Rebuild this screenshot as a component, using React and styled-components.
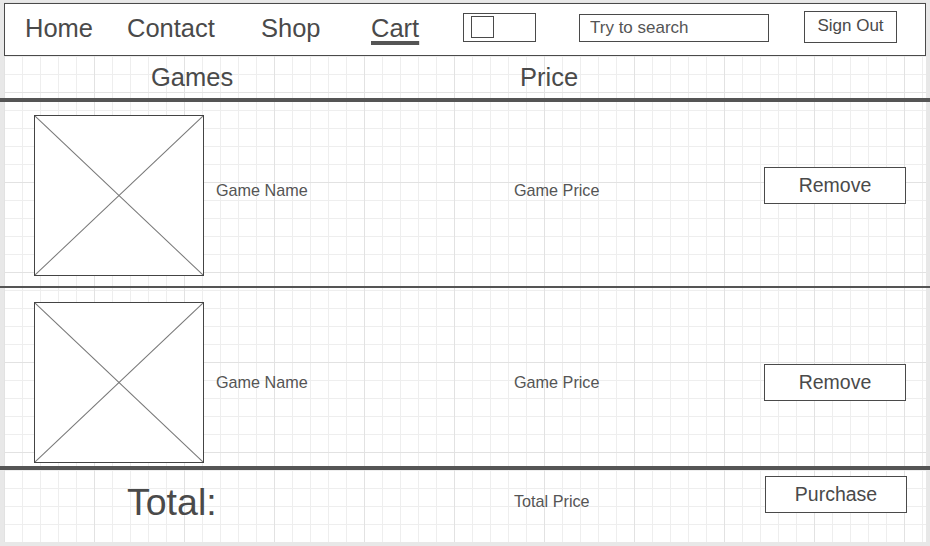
import React from "react";
import styled, { createGlobalStyle } from "styled-components";

const GlobalStyle = createGlobalStyle`
  html, body {
    margin: 0;
    padding: 0;
    background: #e8e8e8;
    font-family: "Liberation Sans", Arial, sans-serif;
    color: #4a4a4a;
  }
`;

const Canvas = styled.div`
  margin: 2px 0 0 4px;
  width: 922px;
  height: 540px;
  background-color: #fff;
  background-image:
    linear-gradient(#e2e2e2 1px, transparent 1px),
    linear-gradient(90deg, #e2e2e2 1px, transparent 1px),
    linear-gradient(#eeeeee 1px, transparent 1px),
    linear-gradient(90deg, #eeeeee 1px, transparent 1px);
  background-size: 90px 90px, 90px 90px, 18px 18px, 18px 18px;
  display: flex;
  flex-direction: column;
`;

const Nav = styled.nav`
  margin-top: 1px;
  height: 53px;
  box-sizing: border-box;
  border: 1.5px solid #4a4a4a;
  background: #fff;
  display: grid;
  grid-template-columns: 102px 134px 110px 92px 116px 225px auto;
  align-items: center;
  padding-left: 20px;
`;

const NavLink = styled.a`
  font-size: 25.5px;
  color: #4a4a4a;
  text-decoration: ${(p) => (p.$active ? "underline" : "none")};
  text-decoration-thickness: 4px;
  text-underline-offset: 4px;
  text-decoration-color: #555;
  margin-top: -2px;
`;

const ToggleBox = styled.div`
  width: 73px;
  height: 29px;
  box-sizing: border-box;
  border: 1.5px solid #4a4a4a;
  padding: 2px 0 0 7px;
  margin-top: -4px;

  & span {
    display: block;
    width: 23px;
    height: 22px;
    box-sizing: border-box;
    border: 1.5px solid #4a4a4a;
  }
`;

const Search = styled.input`
  width: 190px;
  height: 28px;
  box-sizing: border-box;
  border: 1.5px solid #4a4a4a;
  padding: 0 10px;
  margin-top: -3px;
  font-family: inherit;
  font-size: 17px;
  background: #fff;

  &::placeholder {
    color: #555;
  }
`;

const Button = styled.button`
  box-sizing: border-box;
  border: 1.5px solid #4a4a4a;
  background: #fff;
  font-family: inherit;
  color: #4a4a4a;
  padding: 0;
  font-size: ${(p) => p.$size || "19.5px"};
  width: ${(p) => p.$w || "142px"};
  height: ${(p) => p.$h || "37px"};
  line-height: 1;
`;

const SignOut = styled(Button)`
  margin-top: -5px;
  padding-bottom: 4px;
`;

const Divider = styled.div`
  height: ${(p) => (p.$thick ? "4px" : "2px")};
  background: #555;
  margin: 0 -5px 0 -4px;
  flex-shrink: 0;
`;

const HeaderRow = styled.div`
  height: 42px;
  display: grid;
  grid-template-columns: 369px auto;
  align-items: center;
  padding-left: 147px;
  font-size: 25.5px;
  color: #4a4a4a;
`;

const GameRow = styled.div`
  display: grid;
  grid-template-columns: 182px 298px 250px 142px;
  align-items: center;
  padding: ${(p) => (p.$lift ? "13px 0 10px 30px" : "14px 0 3px 30px")};
  font-size: 16.2px;
  color: #555;
`;

const Thumb = styled.div`
  width: 170px;
  height: 161px;
  box-sizing: border-box;
  border: 1.5px solid #444;
  background: #fff;

  & svg {
    display: block;
    width: 100%;
    height: 100%;
  }
`;

const Cell = styled.div`
  margin-bottom: ${(p) => p.$up || "0"};
`;

const TotalRow = styled.div`
  flex: 1;
  display: grid;
  grid-template-columns: 387px 251px 142px;
  align-items: center;
  padding-left: 123px;
  color: #4a4a4a;
`;

const TotalLabel = styled.div`
  font-size: 37.5px;
  margin-bottom: 8px;
`;

const TotalPrice = styled.div`
  font-size: 16.2px;
  color: #555;
  margin-bottom: 10px;
`;

const PurchaseWrap = styled.div`
  align-self: start;
  margin-top: 6px;
`;

const Placeholder = () => (
  <Thumb>
    <svg viewBox="0 0 167 158" preserveAspectRatio="none">
      <line x1="0" y1="0" x2="167" y2="158" stroke="#777" strokeWidth="1" />
      <line x1="167" y1="0" x2="0" y2="158" stroke="#777" strokeWidth="1" />
    </svg>
  </Thumb>
);

const games = [
  { id: 1, name: "Game Name", price: "Game Price", lift: true },
  { id: 2, name: "Game Name", price: "Game Price", lift: false },
];

const App = () => {
  return (
    <>
      <GlobalStyle />
      <Canvas>
        <Nav>
          <NavLink>Home</NavLink>
          <NavLink>Contact</NavLink>
          <NavLink>Shop</NavLink>
          <NavLink $active>Cart</NavLink>
          <ToggleBox>
            <span />
          </ToggleBox>
          <Search placeholder="Try to search" />
          <SignOut $size="17px" $w="93px" $h="32px">
            Sign Out
          </SignOut>
        </Nav>
        <HeaderRow>
          <div>Games</div>
          <div>Price</div>
        </HeaderRow>
        <Divider $thick />
        {games.map((g, i) => (
          <React.Fragment key={g.id}>
            <GameRow $lift={g.lift}>
              <Placeholder />
              <Cell $up={g.lift ? "10px" : "0"}>{g.name}</Cell>
              <Cell $up={g.lift ? "10px" : "0"}>{g.price}</Cell>
              <Cell $up={g.lift ? "20px" : "0"}>
                <Button>Remove</Button>
              </Cell>
            </GameRow>
            {i < games.length - 1 ? <Divider /> : <Divider $thick />}
          </React.Fragment>
        ))}
        <TotalRow>
          <TotalLabel>Total:</TotalLabel>
          <TotalPrice>Total Price</TotalPrice>
          <PurchaseWrap>
            <Button>Purchase</Button>
          </PurchaseWrap>
        </TotalRow>
      </Canvas>
    </>
  );
};

export default App;
